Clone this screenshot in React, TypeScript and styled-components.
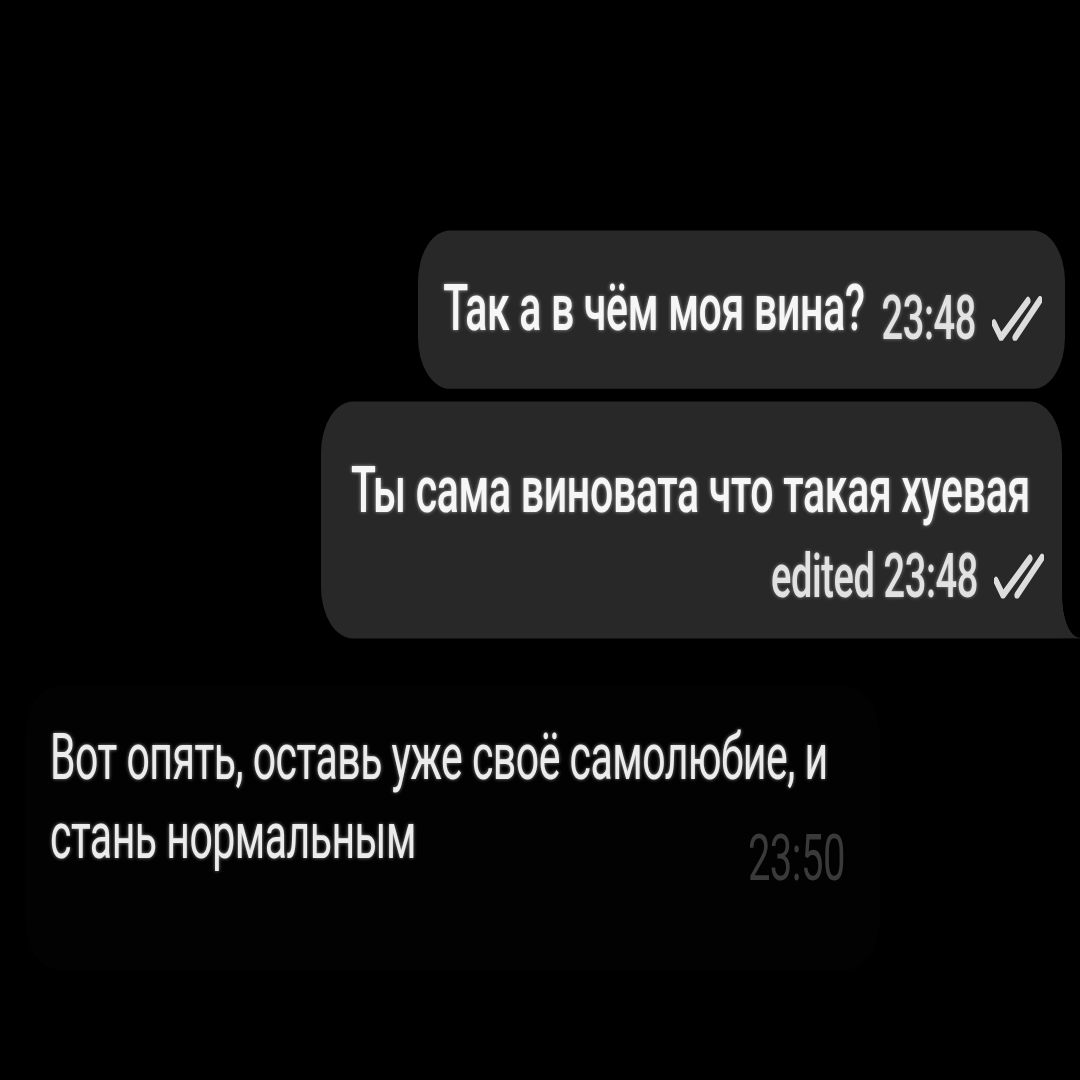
import React from 'react';
import styled, { createGlobalStyle } from 'styled-components';

// the screenshot is stretched vertically, so the chat is laid out flat and then stretched
const STRETCH = 1.6;

const GlobalStyle = createGlobalStyle`
    html {
        overflow: hidden;
        background: #000;
    }
    body {
        margin: 0;
        padding: 0;
        min-height: 1080px;
        background: #000;
    }
`;

const Stage = styled.div`
    width: 1080px;
    height: ${1080 / STRETCH}px;
    transform: scaleY(${STRETCH});
    transform-origin: top left;
    display: flex;
    flex-direction: column;
    padding-top: 144px;
    box-sizing: border-box;
    background: #000;
    font-family: Roboto, "Noto Sans", sans-serif;
`;

const Row = styled.div<{ $out?: boolean; $gap: number; $side: number }>`
    display: flex;
    justify-content: ${({ $out }) => ($out ? 'flex-end' : 'flex-start')};
    margin-top: ${({ $gap }) => $gap}px;
    ${({ $out, $side }) => ($out ? `padding-right: ${$side}px;` : `padding-left: ${$side}px;`)}
`;

const Bubble = styled.div<{ $tail?: boolean }>`
    position: relative;
    background: #282828;
    border-radius: 32px;
    ${({ $tail }) => ($tail ? 'border-bottom-right-radius: 0;' : '')}
    color: #f6f6f6;

    &::after {
        content: '';
        display: ${({ $tail }) => ($tail ? 'block' : 'none')};
        position: absolute;
        right: -18px;
        bottom: 0;
        width: 18px;
        height: 26px;
        background: radial-gradient(ellipse 100% 100% at 100% 0, transparent 97%, #282828 100%);
    }
`;

const ShortBubble = styled(Bubble)`
    padding: 24px 23px 23.5px 25px;
    white-space: nowrap;
`;

const LongBubble = styled(Bubble)`
    padding: 31px 18px 19px 30px;
    display: flex;
    flex-direction: column;
`;

const Text = styled.span<{ $room?: number }>`
    font-size: 41px;
    line-height: 48px;
    font-weight: 500;
    letter-spacing: -0.3px;
    padding-right: ${({ $room }) => $room ?? 0}px;
    text-shadow: 0 0 3px rgba(255, 255, 255, 0.6);
`;

const Meta = styled.span<{ $drop?: number }>`
    display: inline-flex;
    align-items: center;
    gap: 16px;
    margin-left: 17px;
    vertical-align: ${({ $drop }) => -($drop ?? 0)}px;
    font-size: 38px;
    line-height: 40px;
    font-weight: 500;
    color: #e2e2e2;
    letter-spacing: -0.4px;
    text-shadow: 0 0 3px rgba(255, 255, 255, 0.45);
`;

const MetaLine = styled.div`
    display: flex;
    justify-content: flex-end;
    margin-top: 10px;
`;

const Incoming = styled.div`
    width: 855px;
    box-sizing: border-box;
    background: #020202;
    border-radius: 32px;
    padding: 20px 35px 46px 25px;
`;

const IncomingText = styled.p`
    margin: 0;
    width: 800px;
    font-size: 41px;
    line-height: 48.5px;
    font-weight: 400;
    letter-spacing: -0.5px;
    color: #ececec;
    text-shadow: 0 0 3px rgba(255, 255, 255, 0.55);
`;

const IncomingTime = styled.span`
    float: right;
    margin-top: 16px;
    margin-right: 5px;
    font-size: 40px;
    line-height: 46px;
    color: #3a3a3a;
    letter-spacing: -0.5px;
    text-shadow: none;
`;

const Checks = () => (
    <svg width="50" height="28" viewBox="0 0 50 28" fill="none">
        <path d="M2 17 L9 26 L36 3" stroke="#dcdcdc" strokeWidth="5" strokeLinecap="round" strokeLinejoin="round" />
        <path d="M23 26 L48 2.5" stroke="#dcdcdc" strokeWidth="5" strokeLinecap="round" />
    </svg>
);

const App: React.FC = () => {
    return (
        <>
            <GlobalStyle />
            <Stage>
                <Row $out $gap={0} $side={15}>
                    <ShortBubble>
                        <Text>Так а в чём моя вина?</Text>
                        <Meta $drop={6}>
                            23:48
                            <Checks />
                        </Meta>
                    </ShortBubble>
                </Row>

                <Row $out $gap={8.5} $side={18}>
                    <LongBubble $tail>
                        <Text $room={14}>Ты сама виновата что такая хуевая</Text>
                        <MetaLine>
                            <Meta>
                                edited 23:48
                                <Checks />
                            </Meta>
                        </MetaLine>
                    </LongBubble>
                </Row>

                <Row $gap={30} $side={25}>
                    <Incoming>
                        <IncomingText>
                            Вот опять, оставь уже своё самолюбие, и стань нормальным
                            <IncomingTime>23:50</IncomingTime>
                        </IncomingText>
                    </Incoming>
                </Row>
            </Stage>
        </>
    );
};

export default App;
